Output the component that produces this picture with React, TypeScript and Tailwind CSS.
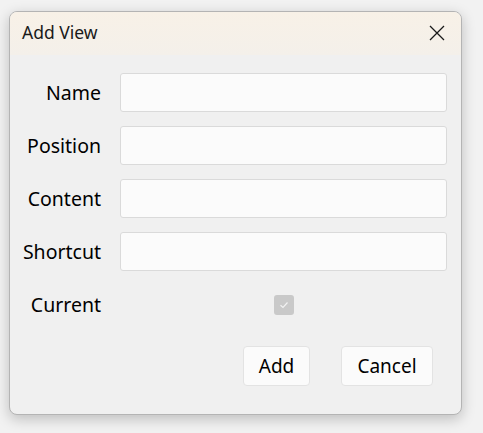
import React from "react";

const font = { fontFamily: '"Noto Sans", "Open Sans", sans-serif' };

function Field({ label }: { label: string }) {
  return (
    <div className="flex h-[39px] items-center">
      <label className="w-[91px] text-right text-[19.5px] leading-none text-black">{label}</label>
      <input
        type="text"
        className="ml-[19px] h-[39px] w-[327px] rounded-[3px] border border-[#dadada] bg-[#fbfbfb] outline-none"
      />
    </div>
  );
}

export default function App() {
  return (
    <div className="h-[433px] w-[483px] bg-[#f2f2f2] pl-[9px] pt-[11px]" style={font}>
      <div className="flex h-[404px] w-[453px] flex-col overflow-hidden rounded-[8px] border border-[#b4b4b4] bg-[#f0f0f0] shadow-[0_4px_14px_rgba(0,0,0,0.22)]">
        {/* title bar */}
        <div className="flex h-[43px] shrink-0 items-center justify-between bg-gradient-to-b from-[#f8f1e7] to-[#f4f0ea] pb-[2px] pl-[12px] pr-[16px]">
          <span className="text-[17.5px] text-[#1a1a1a]">Add View</span>
          <svg width="16" height="16" viewBox="0 0 16 16" className="text-[#1a1a1a]">
            <path d="M1 1L15 15M15 1L1 15" stroke="currentColor" strokeWidth="1.3" fill="none" />
          </svg>
        </div>

        <div className="flex flex-col gap-[14px] pt-[18px]">
          <Field label="Name" />
          <Field label="Position" />
          <Field label="Content" />
          <Field label="Shortcut" />
          <div className="flex h-[39px] items-center">
            <span className="w-[91px] text-right text-[19.5px] leading-none text-black">Current</span>
            <div className="ml-[19px] flex w-[327px] justify-center">
              <div className="flex h-[20px] w-[20px] items-center justify-center rounded-[3px] bg-[#c9c9c9]">
                <svg width="12" height="12" viewBox="0 0 12 12">
                  <path d="M2.5 6.2L5 8.5L9.5 3.5" stroke="#f2f2f2" strokeWidth="1.2" fill="none" />
                </svg>
              </div>
            </div>
          </div>
        </div>

        <div className="mt-[22px] flex justify-end gap-[31px] pr-[28px]">
          <button className="h-[40px] w-[67px] rounded-[4px] border border-[#e3e3e3] bg-[#fbfbfb] text-[19px] text-black">
            Add
          </button>
          <button className="h-[40px] w-[92px] rounded-[4px] border border-[#e3e3e3] bg-[#fbfbfb] text-[19px] text-black">
            Cancel
          </button>
        </div>
      </div>
    </div>
  );
}
